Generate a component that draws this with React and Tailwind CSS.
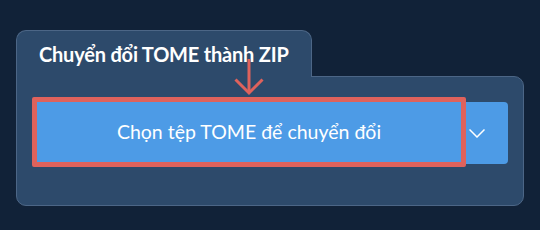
import React from 'react';

const App = () => {
  return (
    <div className="relative w-[540px] h-[230px] bg-[#112238] pt-[30px] pl-4 font-['Lato',sans-serif]">
      <div className="w-[508px]">
        {/* Tab */}
        <div className="relative z-10 -mb-px w-[296px] h-[47px] bg-[#2d4a6b] border border-b-0 border-[#4c6686] rounded-t-[10px] pl-[22px] pt-[11px]">
          <h2 className="text-white font-bold text-[20px] leading-6 tracking-[-0.2px]">Chuyển đổi TOME thành ZIP</h2>
        </div>

        {/* Body */}
        <div className="h-[130px] bg-[#2d4a6b] border border-[#4c6686] rounded-b-[10px] rounded-tr-[10px] pl-[15px] pt-5">
          <div className="flex">
            <button className="relative z-10 w-[434px] h-[70px] border-[5px] border-[#df625c] rounded-[2px] bg-[#4d9be6] text-white text-[19.5px] font-normal">
              Chọn tệp TOME để chuyển đổi
            </button>
            <button className="mt-[5px] w-[42px] h-[62px] bg-[#4d9be6] rounded-r-[4px] flex items-center pl-[3px]">
              <svg width="16" height="9" viewBox="0 0 16 9" fill="none">
                <polyline points="0.5,0.5 8,8 15.5,0.5" stroke="white" strokeWidth="1.5" />
              </svg>
            </button>
          </div>
        </div>
      </div>

      {/* Arrow pointing at the button */}
      <svg className="absolute left-[234px] top-[59px] z-20" width="30" height="37" viewBox="0 0 30 37" fill="none">
        <line x1="15" y1="0" x2="15" y2="34" stroke="#df625c" strokeWidth="3" />
        <polyline points="1.5,20.5 15,34 28.5,20.5" stroke="#df625c" strokeWidth="3" />
      </svg>
    </div>
  );
};

export default App;
